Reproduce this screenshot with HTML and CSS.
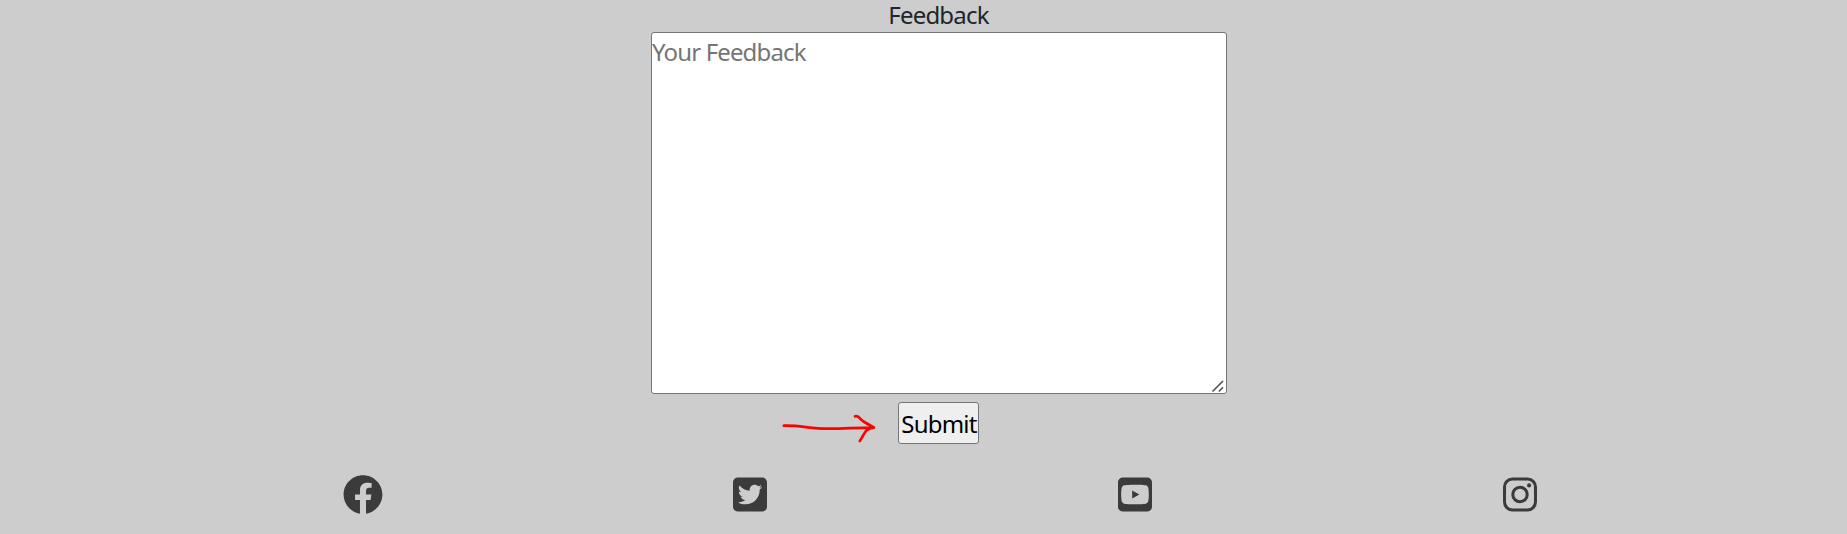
FILE: index.html
```html
<!DOCTYPE html>
<html lang="en">
<head>
<meta charset="utf-8">
<title>Feedback</title>
<link rel="stylesheet" href="styles.css">
</head>
<body>
<form class="feedback">
  <label class="feedback-label" for="message">Feedback</label>
  <div class="message-box">
    <textarea class="feedback-message" id="message" placeholder="Your Feedback"></textarea>
    <svg class="grip" width="14" height="14" viewBox="0 0 14 14" fill="none" stroke="#505050" stroke-width="1.6"><path d="M1.500 12.500L12 2M7.800 12.500L12 8.300"/></svg>
  </div>
  <div class="actions">
    <button class="submit" type="button">Submit</button>
    <svg class="arrow" width="94" height="30" viewBox="0 0 94 30" fill="none" stroke="#f00" stroke-width="2.7" stroke-linecap="round" stroke-linejoin="round"><path d="M1.8 11.7C16 11 29 14.7 45 14.7C60 14.9 74 13.7 92 13.6M73 2.4Q76 1.6 78 4.5C82 8.5 87 10.5 92 13.6C82 14.5 83 20 77.8 27"/></svg>
  </div>
</form>
<footer class="social">
  <svg class="icon-round" viewBox="0 0 512 512"><path d="M504 256C504 119 393 8 256 8S8 119 8 256c0 123.78 90.69 226.38 209.25 245V327.69h-63V256h63v-54.64c0-62.15 37-96.48 93.67-96.48 27.14 0 55.52 4.84 55.52 4.84v61h-31.28c-30.8 0-40.41 19.12-40.41 38.73V256h68.78l-11 71.69h-57.78V501C413.31 482.38 504 379.78 504 256z"/></svg>
  <svg class="icon-square" viewBox="0 0 448 512"><path d="M384 32H64C28.7 32 0 60.7 0 96v320c0 35.3 28.7 64 64 64h320c35.3 0 64-28.7 64-64V96c0-35.3-28.7-64-64-64zm-32.9 158.8c.2 2.8.2 5.7.2 8.5 0 86.7-66 186.6-186.6 186.6-37.2 0-71.7-10.8-100.7-29.4 5.3.6 10.4.8 15.8.8 30.7 0 58.9-10.4 81.4-28-28.8-.6-53-19.5-61.3-45.5 10.1 1.5 19.2 1.5 29.6-1.2-30-6.1-52.5-32.5-52.5-64.4v-.8c8.7 4.9 18.9 7.9 29.6 8.3a65.447 65.447 0 0 1-29.2-54.6c0-12.2 3.2-23.4 8.9-33.1 32.3 39.8 80.8 65.8 135.2 68.6-9.3-44.5 24-80.6 64-80.6 18.9 0 35.9 7.9 47.9 20.7 14.8-2.8 29-8.3 41.6-15.8-4.9 15.2-15.2 28-28.8 36.1 13.2-1.4 26-5.1 37.8-10.2-8.9 13.1-20.1 24.7-32.9 34z"/></svg>
  <svg class="icon-square" viewBox="0 0 448 512"><path fill-rule="evenodd" d="M186.8 202.1l95.2 54.1-95.2 54.1zM64 32H384C419.300 32 448 60.700 448 96V416C448 451.300 419.300 480 384 480H64C28.700 480 0 451.300 0 416V96C0 60.700 28.700 32 64 32zM406 256.300s0-59.600-7.600-88.200c-4.200-15.800-16.500-28.200-32.200-32.400C337.900 128 224 128 224 128s-113.900 0-142.200 7.700c-15.700 4.200-28 16.600-32.200 32.400-7.600 28.500-7.600 88.200-7.600 88.200s0 59.600 7.600 88.200c4.200 15.800 16.500 27.700 32.200 31.900C110.100 384 224 384 224 384s113.900 0 142.200-7.700c15.700-4.200 28-16.100 32.200-31.900 7.600-28.500 7.600-88.100 7.600-88.100z"/></svg>
  <svg class="icon-square" viewBox="0 0 448 512"><g fill="none" stroke="#3b3b3b" stroke-width="40"><rect x="20" y="52" width="408" height="408" rx="104"/><circle cx="224" cy="256" r="95"/></g><circle cx="343.700" cy="136.300" r="27"/></svg>
</footer>
</body>
</html>
```
FILE: styles.css
```css
* { box-sizing: border-box; }

body {
  margin: 0;
  height: 534px;
  overflow: hidden;
  background: #cdcdcd;
  color: #212529;
  font: 24px/32px "Noto Sans", sans-serif;
}

.feedback {
  display: flex;
  flex-direction: column;
  align-items: center;
  padding-left: 31px;
}

.feedback-label {
  height: 32px;
  margin-right: 1px;
  line-height: 29px;
  letter-spacing: -0.8px;
}

.message-box {
  position: relative;
  height: 362px;
}

.feedback-message {
  display: block;
  width: 576px;
  height: 362px;
  margin: 0;
  padding: 3px 0;
  border: 1px solid #767676;
  border-radius: 3px;
  background: #fff;
  font: inherit;
  letter-spacing: -0.85px;
  resize: none;
}

.feedback-message::placeholder { color: #757575; }

/* Resize grip in the corner of the field */
.grip {
  position: absolute;
  right: 2px;
  bottom: 1px;
}

.actions {
  position: relative;
  margin: 8px 1px 0 0;
}

.submit {
  display: block;
  width: 81px;
  height: 42px;
  padding: 1px 0 0 1px;
  border: 1px solid #767676;
  border-radius: 3px;
  background: #efefef;
  color: #000;
  font: inherit;
  letter-spacing: -0.8px;
}

/* Hand-drawn pointer beside the button */
.arrow {
  position: absolute;
  right: 103px;
  top: 12px;
}

.social {
  display: flex;
  justify-content: space-around;
  width: 1545px;
  margin: 30px 0 0 167.5px;
}

.social svg { height: 41px; fill: #3b3b3b; }
.icon-round { width: 40px; }
.icon-square { width: 34px; margin: 0 0.5px; }
```
